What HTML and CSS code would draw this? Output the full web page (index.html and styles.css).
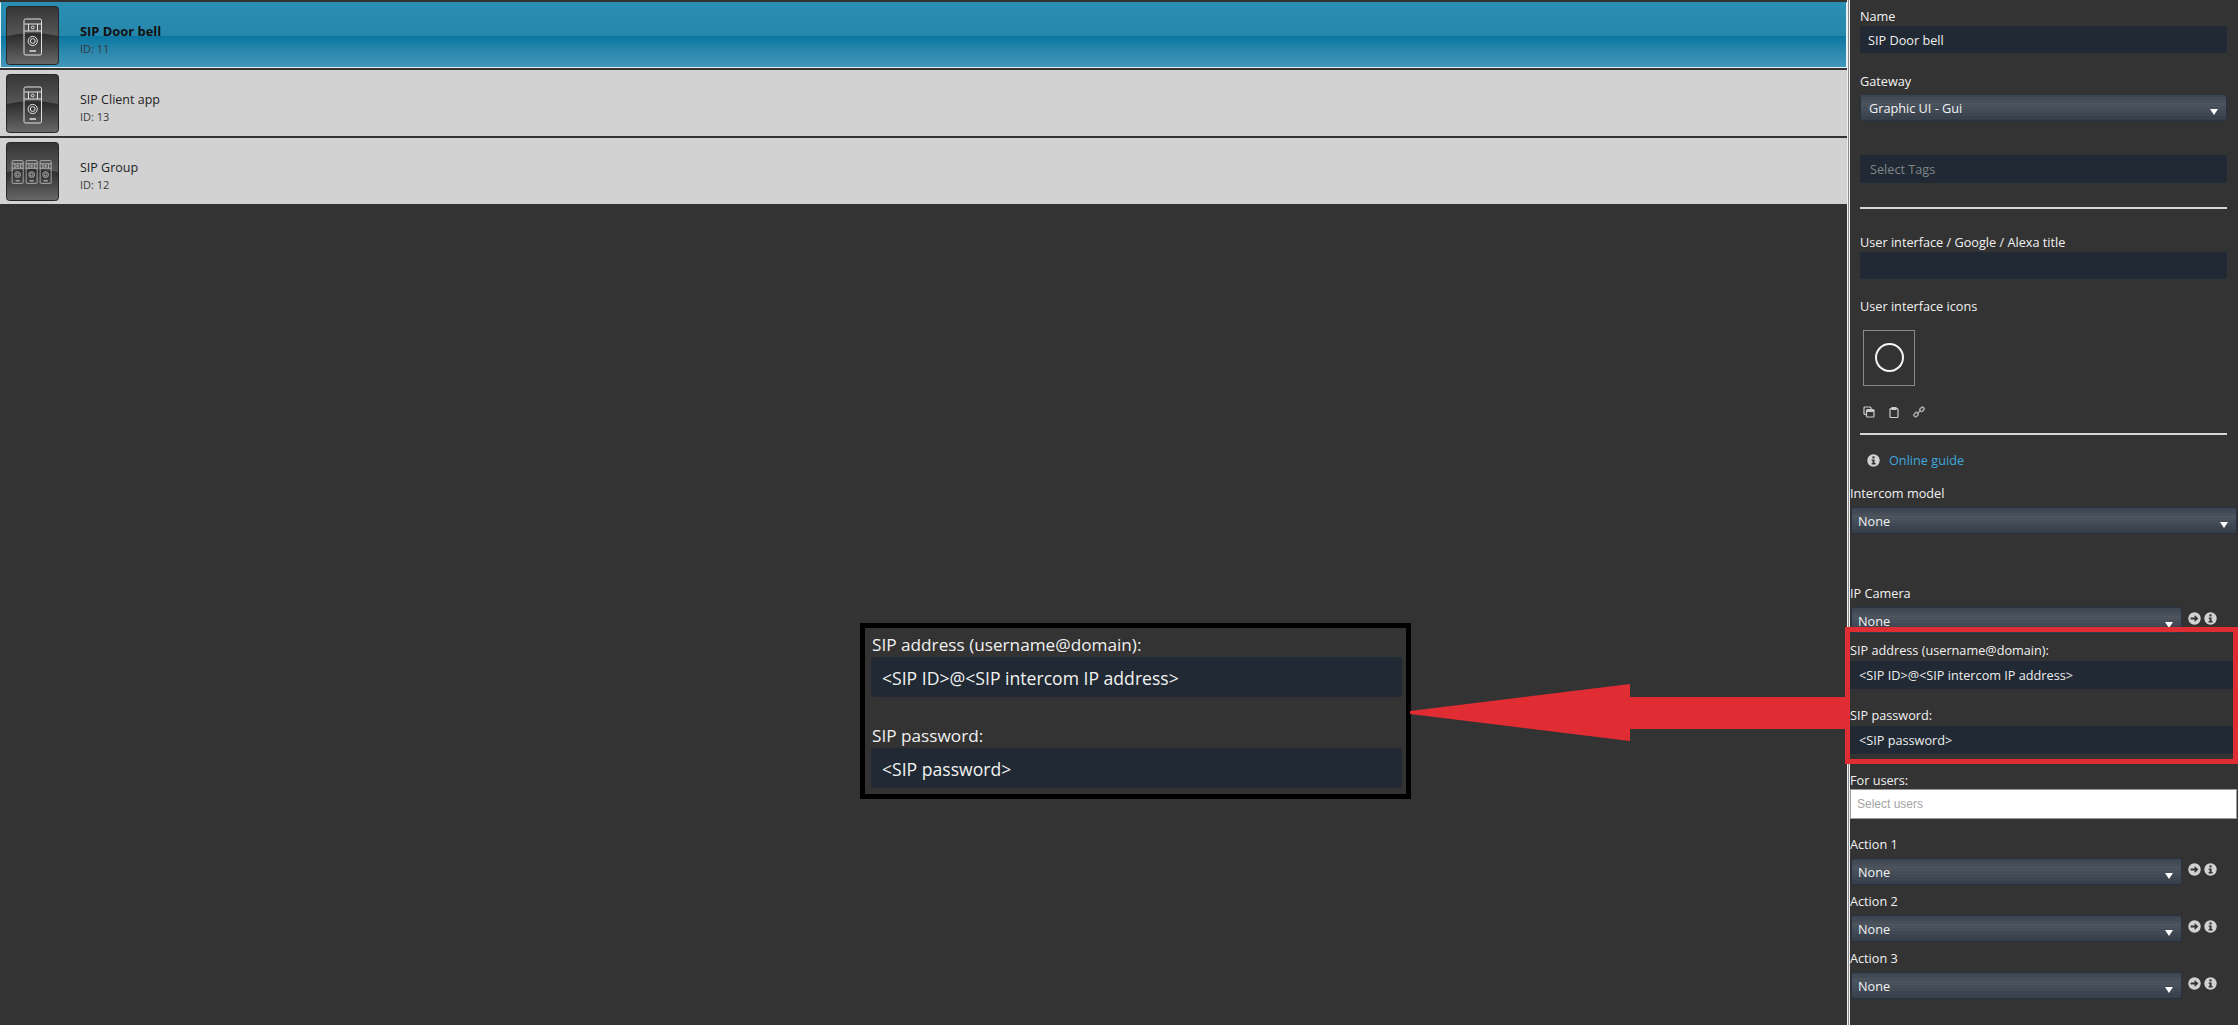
FILE: index.html
```html
<!DOCTYPE html>
<html lang="en">
<head>
  <meta charset="UTF-8" />
  <title>SIP Door bell</title>
  <link rel="stylesheet" href="styles.css">
</head>
<body>

<svg class="defs" width="0" height="0">
  <defs>
    <linearGradient id="tile-top" x1="0" y1="0" x2="0" y2="1">
      <stop offset="0" stop-color="#363636"/>
      <stop offset="1" stop-color="#575757"/>
    </linearGradient>
    <linearGradient id="tile-bottom" x1="0" y1="0" x2="0" y2="1">
      <stop offset="0" stop-color="#2a2a2a"/>
      <stop offset="0.5" stop-color="#2e2e2e"/>
      <stop offset="1" stop-color="#686868"/>
    </linearGradient>
    <symbol id="tile" viewBox="0 0 54 59" preserveAspectRatio="none">
      <rect x="0.5" y="0.5" width="53" height="58" rx="3" fill="url(#tile-bottom)" stroke="#262626"/>
      <path d="M1 4a3 3 0 0 1 3-3h46a3 3 0 0 1 3 3v26q-26-6-52 0z" fill="url(#tile-top)"/>
    </symbol>
    <symbol id="bell" viewBox="0 0 20 38">
      <g fill="none" stroke="#e2e2e2">
        <rect x="1.500" y="1" width="17.500" height="36" rx="1.500"/>
        <path d="M2 6h17M2 13h17M6 6v7M15 6v7"/>
        <circle cx="10.200" cy="9.500" r="1.400"/>
        <circle cx="10.200" cy="23" r="4.600"/>
        <circle cx="10.200" cy="23" r="2.400"/>
        <path d="M7 33h6.500" stroke-width="1.400"/>
      </g>
    </symbol>
    <symbol id="info" viewBox="0 0 13 13">
      <circle cx="6.500" cy="6.500" r="6.200" fill="#d2d2d2"/>
      <rect x="5.400" y="2.400" width="2.200" height="2" fill="#333"/>
      <path d="M4.600 5.400h3v3.600h1v1.400H4.600V9h1V6.800h-1z" fill="#333"/>
    </symbol>
    <symbol id="go" viewBox="0 0 13 13">
      <circle cx="6.500" cy="6.500" r="6.200" fill="#d2d2d2"/>
      <path d="M2.600 5.400h4V3l3.800 3.500L6.600 10V7.600h-4z" fill="#333"/>
    </symbol>
  </defs>
</svg>

<div class="app">
  <main class="list">
    <div class="row selected">
      <svg class="tile"><use href="#tile"/><use href="#bell" x="16.500" y="12" width="20" height="38"/></svg>
      <div class="row-text"><strong>SIP Door bell</strong><small>ID: 11</small></div>
    </div>
    <div class="row">
      <svg class="tile"><use href="#tile"/><use href="#bell" x="16.500" y="12" width="20" height="38"/></svg>
      <div class="row-text"><span>SIP Client app</span><small>ID: 13</small></div>
    </div>
    <div class="row">
      <svg class="tile"><use href="#tile"/><use href="#bell" x="5" y="18" width="13" height="24"/><use href="#bell" x="19" y="18" width="13" height="24"/><use href="#bell" x="33" y="18" width="13" height="24"/></svg>
      <div class="row-text"><span>SIP Group</span><small>ID: 12</small></div>
    </div>
  </main>

  <div class="splitter"></div>

  <aside class="side">
    <div class="inset">
      <label class="lbl lbl-first">Name</label>
      <div class="inp">SIP Door bell</div>
      <label class="lbl lbl-gateway">Gateway</label>
      <div class="sel">Graphic UI - Gui</div>
      <div class="inp tags">Select Tags</div>
      <hr class="rule rule-a">
      <label class="lbl lbl-title">User interface / Google / Alexa title</label>
      <div class="inp"></div>
      <label class="lbl lbl-icons">User interface icons</label>
      <div class="icon-box"><span class="ring"></span></div>
      <div class="tools">
        <svg width="12" height="12" viewBox="0 0 12 12" fill="none" stroke="#ccc" stroke-width="1.200"><path d="M3 8.500H2a1 1 0 0 1-1-1V2a1 1 0 0 1 1-1h5a1 1 0 0 1 1 1v1"/><rect x="3.500" y="3.500" width="7.500" height="7.500" rx="1"/><path d="M3.500 5h7.500" stroke-width="2"/></svg>
        <svg width="12" height="12" viewBox="0 0 12 12" fill="none" stroke="#ccc" stroke-width="1.200"><rect x="2" y="2.500" width="8" height="9" rx="1"/><path d="M4 1.500h4v2H4z" fill="#ccc"/></svg>
        <svg width="12" height="12" viewBox="0 0 12 12" fill="none" stroke="#aaa" stroke-width="1.500"><rect x="0.800" y="7" width="4.600" height="3.400" rx="1.600" transform="rotate(-45 3 8.700)"/><rect x="6.600" y="1.600" width="4.600" height="3.400" rx="1.600" transform="rotate(-45 9 3.300)"/><path d="M4.500 7.500l3-3"/></svg>
      </div>
      <hr class="rule rule-b">
      <div class="guide">
        <svg class="round"><use href="#info"/></svg>
        <a href="#">Online guide</a>
      </div>
    </div>

    <label class="lbl lbl-model">Intercom model</label>
    <div class="sel sel-wide">None</div>

    <label class="lbl lbl-camera">IP Camera</label>
    <div class="sel-row">
      <div class="sel">None</div>
      <svg class="round"><use href="#go"/></svg>
      <svg class="round"><use href="#info"/></svg>
    </div>

    <label class="lbl lbl-address">SIP address (username@domain):</label>
    <div class="inp inp-flat">&lt;SIP ID&gt;@&lt;SIP intercom IP address&gt;</div>
    <label class="lbl lbl-password">SIP password:</label>
    <div class="inp inp-flat">&lt;SIP password&gt;</div>

    <label class="lbl lbl-users">For users:</label>
    <div class="users">Select users</div>

    <label class="lbl lbl-action1">Action 1</label>
    <div class="sel-row">
      <div class="sel">None</div>
      <svg class="round"><use href="#go"/></svg>
      <svg class="round"><use href="#info"/></svg>
    </div>
    <label class="lbl lbl-action">Action 2</label>
    <div class="sel-row">
      <div class="sel">None</div>
      <svg class="round"><use href="#go"/></svg>
      <svg class="round"><use href="#info"/></svg>
    </div>
    <label class="lbl lbl-action">Action 3</label>
    <div class="sel-row">
      <div class="sel">None</div>
      <svg class="round"><use href="#go"/></svg>
      <svg class="round"><use href="#info"/></svg>
    </div>
  </aside>
</div>

<!-- callout annotations on top of the screenshot -->
<div class="callout">
  <div class="big-lbl">SIP address (username@domain):</div>
  <div class="big-inp">&lt;SIP ID&gt;@&lt;SIP intercom IP address&gt;</div>
  <div class="big-lbl big-lbl-second">SIP password:</div>
  <div class="big-inp">&lt;SIP password&gt;</div>
</div>
<svg class="arrow" width="440" height="60" viewBox="0 0 440 60">
  <path d="M0 28L220 1v13h220v32H220V58L0 31z" fill="#e02d33"/>
</svg>
<div class="red-box"></div>

</body>
</html>
```

FILE: styles.css
```css
* {
  box-sizing: border-box;
}

html, body {
  height: 100%;
}

body {
  margin: 0;
  overflow: hidden;
  background-color: #333333;
  color: #f0f0f0;
  font-family: 'Open Sans', sans-serif;
  font-size: 12.7px;
  position: relative;
}

.defs {
  position: absolute;
}

.app {
  display: flex;
  height: 1025px;
}

/* left list */
.list {
  width: 1847px;
  padding-top: 2px;
  display: flex;
  flex-direction: column;
  gap: 2px;
}

.row {
  height: 66px;
  display: flex;
  align-items: center;
  padding-left: 6px;
  background-color: #d2d2d2;
  color: #222;
}

.row.selected {
  border: 1px solid #e8f2f6;
  border-top-color: #2b8fb3;
  padding-left: 5px;
  background: linear-gradient(#2a8fb4 0%, #2687ab 51%, #0a77a3 52%, #2a87ad 75%, #4197bb 100%);
  color: #111;
}

.tile {
  width: 53px;
  height: 59px;
  flex: none;
}

.row-text {
  margin-left: 21px;
  padding-top: 10px;
  display: flex;
  flex-direction: column;
  font-size: 12.5px;
  line-height: 17px;
}

.row-text strong {
  font-weight: 700;
  font-size: 12.900px;
}

.row-text small {
  font-size: 11px;
  color: #3a3a3a;
}

.splitter {
  width: 3px;
  flex: none;
  background-color: #8c8c8c;
  border-left: 1px solid #eee;
  border-right: 1px solid #eee;
}

/* right form */
.side {
  flex: 1;
  min-width: 0;
  padding-right: 1px;
}

.inset {
  padding-left: 10px;
  padding-right: 10px;
}

.lbl {
  display: block;
  line-height: 17px;
  height: 16px;
  color: #f2f2f2;
}

.lbl-first { margin-top: 8px; margin-bottom: 2px; }
.lbl-gateway { margin-top: 20px; margin-bottom: 5px; }
.lbl-title { margin-top: 25px; margin-bottom: 2px; }
.lbl-icons { margin-top: 19px; margin-bottom: 16px; }
.lbl-model { margin-top: 16px; margin-bottom: 6px; }
.lbl-camera { margin-top: 51px; margin-bottom: 6px; }
.lbl-address { margin-top: 8px; margin-bottom: 3px; }
.lbl-password { margin-top: 18px; margin-bottom: 3px; }
.lbl-users { margin-top: 18px; margin-bottom: 1px; }
.lbl-action1 { margin-top: 17px; margin-bottom: 6px; }
.lbl-action { margin-top: 8px; margin-bottom: 6px; }

.inp {
  height: 27px;
  line-height: 29px;
  padding: 0 8px;
  background-color: #212a34;
  border-radius: 2px;
  color: #eee;
}

.inp.tags {
  margin-top: 34px;
  height: 28px;
  padding-left: 10px;
  color: #7f8589;
}

.inp-flat {
  height: 28px;
  line-height: 29px;
  border-radius: 0;
  margin-right: 3px;
  padding-left: 9px;
}

.rule {
  margin: 0;
  border: 0;
  height: 2px;
  background-color: #d6d6d6;
}

.rule-a { margin-top: 24px; }
.rule-b { margin-top: 14px; }

.sel {
  position: relative;
  height: 27px;
  line-height: 26px;
  padding-left: 8px;
  border: 1px solid #273240;
  border-radius: 2px;
  color: #f2f2f2;
  background: repeating-linear-gradient(#0000 0 2px, #ffffff05 2px 3px), linear-gradient(#3a434e 0%, #4b535d 35%, #424b56 60%, #333c47 100%);
}

/* little dropdown triangle */
.sel::after {
  content: "";
  position: absolute;
  right: 8px;
  bottom: 5px;
  border-left: 4px solid transparent;
  border-right: 4px solid transparent;
  border-top: 6px solid #fff;
}

.sel-wide {
  margin-left: 1px;
  padding-left: 6px;
}

.sel-row {
  display: flex;
  align-items: flex-start;
  gap: 3px;
  padding-left: 1px;
}

.sel-row .sel {
  width: 331px;
  flex: none;
  padding-left: 6px;
}

.sel-row .round {
  margin-top: 5px;
}

.sel-row .sel + .round {
  margin-left: 3px;
}

.round {
  width: 13px;
  height: 13px;
  flex: none;
}

.icon-box {
  width: 52px;
  height: 56px;
  margin-left: 3px;
  border: 1px solid #8a8a8a;
  display: flex;
  align-items: center;
  justify-content: center;
}

.ring {
  width: 29px;
  height: 29px;
  border: 2px solid #f4f4f4;
  border-radius: 50%;
  margin-bottom: 2px;
}

.tools {
  display: flex;
  gap: 13px;
  margin-top: 20px;
  margin-left: 3px;
  height: 13px;
}

.guide {
  display: flex;
  align-items: center;
  gap: 9px;
  margin-top: 16px;
  padding-left: 7px;
}

.guide a {
  color: #3fa9dc;
  text-decoration: none;
}

.users {
  height: 30px;
  line-height: 28px;
  padding-left: 6px;
  background-color: #fff;
  border: 1px solid #9a9a9a;
  color: #a3a3a3;
  font-family: 'Liberation Sans', sans-serif;
  font-size: 12px;
}

/* overlays */
.red-box {
  position: absolute;
  left: 1845px;
  top: 627px;
  width: 393px;
  height: 137px;
  border: 5px solid #e02d33;
}

.arrow {
  position: absolute;
  left: 1410px;
  top: 683px;
}

.callout {
  position: absolute;
  left: 860px;
  top: 623px;
  width: 551px;
  height: 176px;
  border: 5px solid #000;
  background-color: #333;
  padding: 7px 4px 0 6px;
  font-size: 17.2px;
}

.big-lbl {
  line-height: 20px;
  height: 22px;
  padding-left: 1px;
  color: #f0f0f0;
}

.big-lbl-second {
  margin-top: 29px;
}

.big-inp {
  height: 40px;
  line-height: 42px;
  padding-left: 11px;
  background-color: #212a34;
  border-radius: 3px;
  color: #f2f2f2;
  font-size: 17.6px;
}
```
